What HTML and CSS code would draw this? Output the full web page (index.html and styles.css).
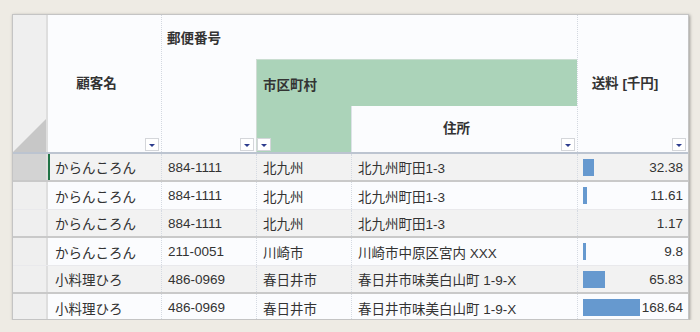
FILE: index.html
```html
<!DOCTYPE html>
<html lang="ja">
<head>
<meta charset="utf-8">
<link rel="stylesheet" href="styles.css">
</head>
<body>
<div class="sheet">
  <div class="head">
    <div class="corner"><div class="tri"></div></div>
    <div class="hc c-name"><span class="lbl center">顧客名</span><span class="flt"></span></div>
    <div class="hc c-zip"><span class="lbl zip">郵便番号</span><span class="flt"></span></div>
    <div class="hc c-city-lbl"><span class="lbl city">市区町村</span></div>
    <div class="hc c-city"><span class="flt"></span></div>
    <div class="hc c-addr"><span class="lbl center">住所</span><span class="flt"></span></div>
    <div class="hc c-fee"><span class="lbl center">送料 [千円]</span><span class="flt"></span></div>
  </div>

  <div class="row odd sel thick">
    <div class="rh"></div>
    <div class="cell first">からんころん</div>
    <div class="cell">884-1111</div>
    <div class="cell">北九州</div>
    <div class="cell">北九州町田1-3</div>
    <div class="cell fee"><span class="bar" style="width:11px"></span><span class="num">32.38</span></div>
  </div>
  <div class="row even">
    <div class="rh"></div>
    <div class="cell first">からんころん</div>
    <div class="cell">884-1111</div>
    <div class="cell">北九州</div>
    <div class="cell">北九州町田1-3</div>
    <div class="cell fee"><span class="bar" style="width:4px"></span><span class="num">11.61</span></div>
  </div>
  <div class="row odd thick">
    <div class="rh"></div>
    <div class="cell first">からんころん</div>
    <div class="cell">884-1111</div>
    <div class="cell">北九州</div>
    <div class="cell">北九州町田1-3</div>
    <div class="cell fee"><span class="bar" style="width:0px"></span><span class="num">1.17</span></div>
  </div>
  <div class="row even">
    <div class="rh"></div>
    <div class="cell first">からんころん</div>
    <div class="cell">211-0051</div>
    <div class="cell">川崎市</div>
    <div class="cell">川崎市中原区宮内 XXX</div>
    <div class="cell fee"><span class="bar" style="width:3px"></span><span class="num">9.8</span></div>
  </div>
  <div class="row odd thick">
    <div class="rh"></div>
    <div class="cell first">小料理ひろ</div>
    <div class="cell">486-0969</div>
    <div class="cell">春日井市</div>
    <div class="cell">春日井市味美白山町 1-9-X</div>
    <div class="cell fee"><span class="bar" style="width:22px"></span><span class="num">65.83</span></div>
  </div>
  <div class="row even">
    <div class="rh"></div>
    <div class="cell first">小料理ひろ</div>
    <div class="cell">486-0969</div>
    <div class="cell">春日井市</div>
    <div class="cell">春日井市味美白山町 1-9-X</div>
    <div class="cell fee"><span class="bar" style="width:57px"></span><span class="num">168.64</span></div>
  </div>
</div>
</body>
</html>
```
FILE: styles.css
```css
html, body {
  margin: 0;
  padding: 0;
}
body {
  background: #eeebe4;
  padding: 14px 0 0 12px;
  font-family: "Liberation Sans", "Noto Sans CJK JP", sans-serif;
  font-size: 13.5px;
  color: #333;
}
.sheet {
  width: 677px;
  height: 306px;
  box-sizing: border-box;
  border: 1px solid #c4c4c4;
  background: #fbfcfe;
  overflow: hidden;
  box-shadow: 1px 1px 3px rgba(0, 0, 0, 0.35);
}
.head {
  display: grid;
  grid-template-columns: 35px 113px 95px 95px 226px 111px;
  grid-template-rows: 44px 47px 46px;
  border-bottom: 2px solid #bcc4d0;
  background: #fbfcfe;
}
.corner {
  grid-column: 1;
  grid-row: 1 / 4;
  background: #efefef;
  border-right: 2px solid #dedede;
  display: flex;
  align-items: flex-end;
}
.tri {
  width: 33px;
  height: 33px;
  background: #c7c7c7;
  clip-path: polygon(100% 0, 100% 100%, 0 100%);
}
.hc {
  display: flex;
  min-width: 0;
  font-weight: bold;
  line-height: 18px;
}
.c-name { grid-column: 2; grid-row: 1 / 4; }
.c-zip { grid-column: 3; grid-row: 1 / 4; border-left: 1px dotted #d3d8e0; }
.c-city-lbl {
  grid-column: 4 / 6;
  grid-row: 2;
  background: #abd3b9;
  border-left: 1px solid #d0dcd4;
  border-top: 1px solid #c9ddd0;
}
.c-city { grid-column: 4; grid-row: 3; background: #abd3b9; border-left: 1px solid #d0dcd4; }
.c-addr { grid-column: 5; grid-row: 3; border-left: 1px solid #dde2e8; }
.c-fee { grid-column: 6; grid-row: 1 / 4; border-left: 1px dotted #d3d8e0; }
.lbl {
  flex: 1;
  white-space: nowrap;
}
.lbl.center {
  display: flex;
  align-items: center;
  justify-content: center;
}
.lbl.zip {
  padding: 15px 0 0 5px;
}
.lbl.city {
  padding: 17px 0 0 6px;
}
.flt {
  flex: none;
  align-self: flex-end;
  width: 14px;
  height: 13px;
  box-sizing: border-box;
  margin: 0 2px 1px 0;
  border: 1px solid #d4d6da;
  background: #fff;
  display: flex;
  align-items: center;
  justify-content: center;
}
.flt::after {
  content: "";
  border-left: 3px solid transparent;
  border-right: 3px solid transparent;
  border-top: 3px solid #2d3c8e;
  margin-top: 1px;
}
.row {
  display: grid;
  grid-template-columns: 35px 113px 95px 95px 226px 111px;
  height: 28px;
  box-sizing: border-box;
  border-bottom: 1px solid #e9e9ec;
}
.row.odd { background: #f2f2f2; }
.row.even { background: #fbfcfe; }
.row.thick { border-bottom: 2px solid #c9c9c9; }
.rh {
  background: #efefef;
  border-right: 2px solid #dedede;
}
.row.sel .rh { background: #d3d3d3; }
.row.sel .first { box-shadow: inset 2px 0 0 #217346; }
.cell {
  display: flex;
  align-items: center;
  padding: 0 6px;
  white-space: nowrap;
  overflow: hidden;
  min-width: 0;
  border-left: 1px dotted #d5dae2;
}
.cell.first {
  border-left: none;
  padding-left: 7px;
}
.cell.fee {
  padding: 0 5px 0 5px;
}
.bar {
  flex: none;
  height: 17px;
  background: #6699cf;
}
.num {
  margin-left: auto;
}
```
